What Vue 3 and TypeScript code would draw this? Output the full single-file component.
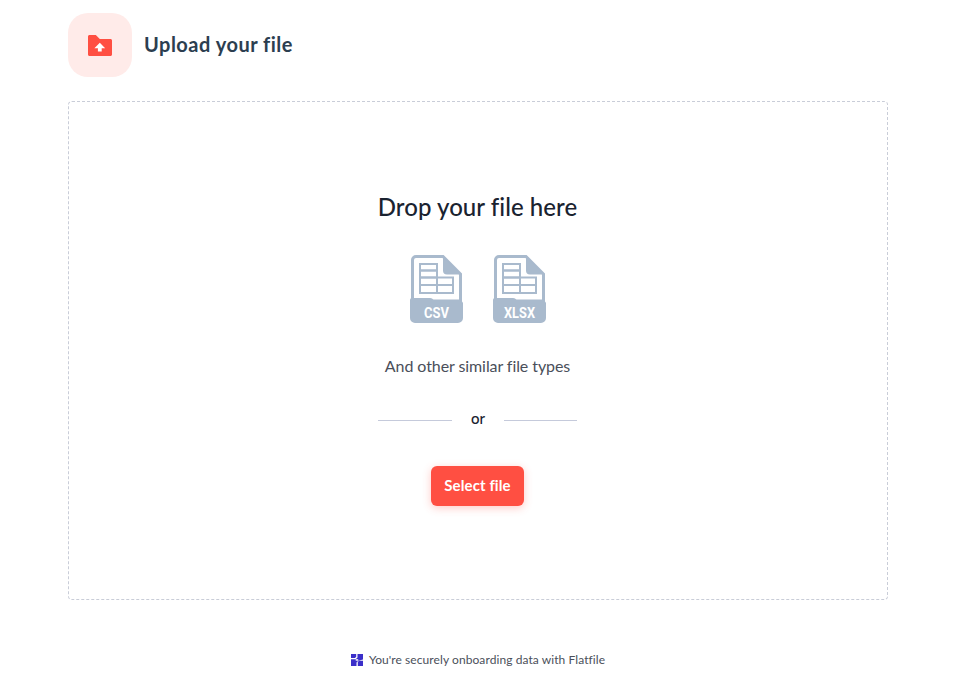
<template>
  <div class="page">
    <header class="head">
      <div class="head-icon">
        <svg width="24" height="21" viewBox="0 0 24 21">
          <path d="M0 1.500C0 .7.700 0 1.500 0h6.300l4 4h10.700c.8 0 1.500.7 1.500 1.500v14c0 .8-.7 1.500-1.500 1.500h-21C.7 21 0 20.300 0 19.500z" fill="#ff4f42" />
          <path d="M11.800 7.800l5.400 5.400h-3.500v3.300h-3.800v-3.300H6.400z" fill="#fff" />
        </svg>
      </div>
      <h1 class="head-title">Upload your file</h1>
    </header>

    <section class="drop">
      <h2 class="drop-title">Drop your file here</h2>
      <div class="types">
        <svg v-for="item in fileTypes" :key="item.label" width="53" height="68" viewBox="0 0 53 68">
          <path d="M6 1.500h27l17.500 17.500V46H2.500V5a3.500 3.500 0 0 1 3.500-3.500z" fill="#fff" stroke="#a9bacd" stroke-width="3" />
          <path d="M33 1.500L51 19.500H37a4 4 0 0 1-4-4z" fill="#a9bacd" />
          <g fill="none" stroke="#a9bacd" stroke-width="2">
            <rect x="10" y="9" width="17" height="6.500" />
            <rect x="10" y="15.500" width="17" height="7" />
            <rect x="10" y="22.500" width="17" height="7.500" />
            <rect x="10" y="30" width="17" height="8" />
            <rect x="27" y="22.500" width="16" height="7.500" />
            <rect x="27" y="30" width="16" height="8" />
          </g>
          <path d="M2 43h18c2 0 3 1.200 4 3h26.500c1.400 0 2.500 1.100 2.500 2.500V63a5 5 0 0 1-5 5H5a5 5 0 0 1-5-5V45c0-1.100.9-2 2-2z" fill="#a9bacd" />
          <text
            x="26.500"
            y="62.500"
            text-anchor="middle"
            class="type-label"
            :textLength="item.width"
            lengthAdjust="spacingAndGlyphs"
          >{{ item.label }}</text>
        </svg>
      </div>
      <p class="types-note">And other similar file types</p>
      <div class="divider">
        <span class="line"></span>
        <span class="or">or</span>
        <span class="line line-right"></span>
      </div>
      <button class="select" type="button">Select file</button>
    </section>

    <footer class="foot">
      <svg width="12" height="12" viewBox="0 0 12 12">
        <rect width="12" height="12" fill="#3b2fc9" />
        <path d="M5.200 0h1.300v3.400L4.700 5.200H0V4h4l1.200-1.200zM12 5.500v1.200H8l-1.200 1.300V12H5.500V8.600l1.800-1.900z" fill="#fff" />
        <path d="M4.700 5.200l2.500 0 0 1.500-2.500 0z" fill="#fff" />
      </svg>
      <span>You're securely onboarding data with Flatfile</span>
    </footer>
  </div>
</template>

<script setup lang="ts">
interface FileType {
  label: string
  width: number
}

const fileTypes: FileType[] = [
  { label: 'CSV', width: 25 },
  { label: 'XLSX', width: 31 },
]
</script>

<style>
html,
body {
  margin: 0;
  background: #fff;
}
</style>

<style scoped>
.page {
  width: 961px;
  height: 689px;
  box-sizing: border-box;
  padding: 13px 73px 0 68px;
  font-family: Lato, "Open Sans", sans-serif;
  overflow: hidden;
}

.head {
  display: flex;
  align-items: center;
  gap: 12px;
  height: 64px;
}

.head-icon {
  width: 64px;
  height: 64px;
  border-radius: 20px;
  background: #ffebe9;
  display: flex;
  align-items: center;
  justify-content: center;
}

.head-title {
  margin: 0 0 2px;
  font-size: 20px;
  font-weight: 700;
  letter-spacing: 0.5px;
  color: #2c3e50;
}

.drop {
  margin-top: 24px;
  height: 499px;
  box-sizing: border-box;
  border: 1px dashed #c9cdd8;
  border-radius: 4px;
  display: flex;
  flex-direction: column;
  align-items: center;
  padding: 90px 1px 0 0;
}

.drop-title {
  margin: 0;
  font-size: 24px;
  line-height: 30px;
  font-weight: 500;
  letter-spacing: 0.05px;
  color: #1a2330;
}

.types {
  display: flex;
  gap: 30px;
  margin-top: 33px;
}

.type-label {
  font-family: Roboto, sans-serif;
  font-size: 14px;
  font-weight: 700;
  fill: #fff;
}

.types-note {
  margin: 33px 0 0;
  font-size: 16px;
  line-height: 20px;
  letter-spacing: -0.08px;
  color: #4a4f5a;
}

.divider {
  display: flex;
  align-items: center;
  justify-content: space-between;
  width: 199px;
  margin-top: 32px;
}

.line {
  width: 74px;
  height: 1px;
  background: #c5cadb;
}

.line-right {
  width: 73px;
}

.or {
  margin-bottom: 4px;
  font-size: 15px;
  line-height: 20px;
  font-weight: 500;
  color: #1a2330;
}

.select {
  margin-top: 34px;
  width: 93px;
  height: 40px;
  padding: 0 0 2px;
  border: 0;
  border-radius: 6px;
  background: #ff4f42;
  color: #fff;
  font-family: inherit;
  font-size: 15px;
  font-weight: 700;
  letter-spacing: 0.1px;
  box-shadow: 0 2px 8px rgba(255, 79, 66, 0.3);
}

.foot {
  display: flex;
  align-items: center;
  justify-content: center;
  gap: 6px;
  margin-top: 52px;
  font-size: 12px;
  letter-spacing: 0.08px;
  color: #4a4f5a;
}
</style>
